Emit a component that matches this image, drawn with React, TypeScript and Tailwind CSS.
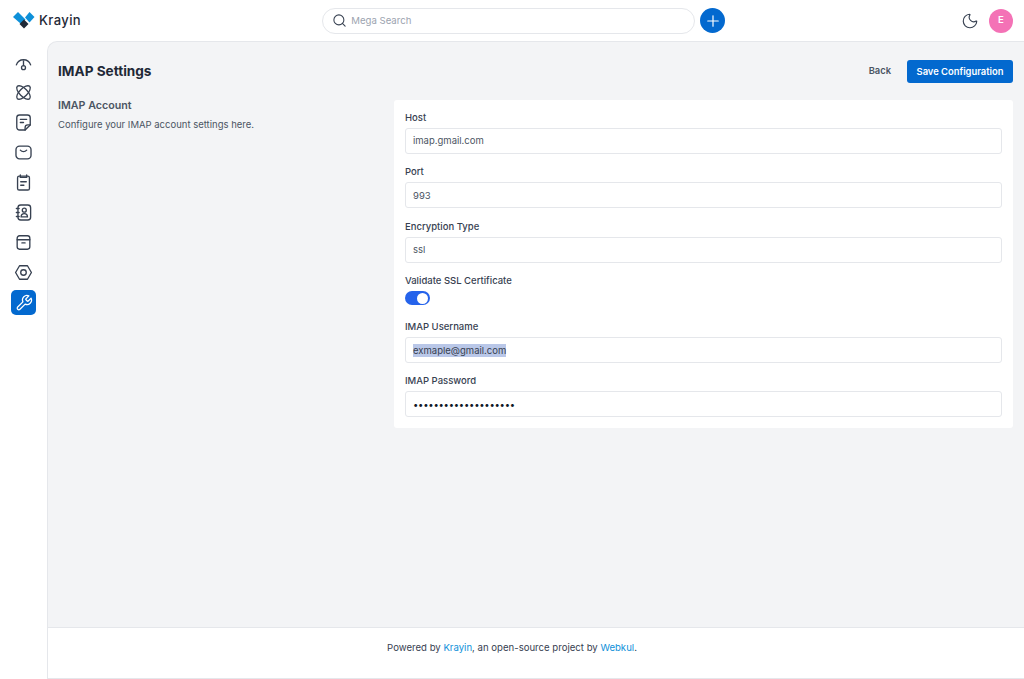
import { Moon, Plus, Search } from "lucide-react";

const navIcons = [
  <g key="dash"><path d="M3 15a9.500 9.500 0 0 1 18 0" /><circle cx="12" cy="18.500" r="2.500" /><path d="M12 16V10" /></g>,
  <g key="leads"><ellipse cx="12" cy="12" rx="11" ry="5" transform="rotate(45 12 12)" /><ellipse cx="12" cy="12" rx="11" ry="5" transform="rotate(-45 12 12)" /></g>,
  <g key="quotes"><path d="M14 21.500H7a3.500 3.500 0 0 1-3.500-3.500V6A3.500 3.500 0 0 1 7 2.500h10A3.500 3.500 0 0 1 20.500 6v9z" /><path d="M14 21.500v-3a3.500 3.500 0 0 1 3.500-3.500h3" /><path d="M8 8h8M8 12h4" /></g>,
  <g key="mail"><rect x="2.500" y="4" width="19" height="16" rx="4.500" /><path d="M8 9c2.200 2.400 5.800 2.400 8 0" /></g>,
  <g key="activity"><rect x="4.500" y="4" width="15" height="17.500" rx="2" /><path d="M8 2.500v3h8v-3M8.500 11h7M8.500 15.500h4" /></g>,
  <g key="contacts"><rect x="5" y="2.500" width="16" height="19" rx="3.500" /><circle cx="13" cy="9" r="2.500" /><path d="M9 17.500c0-5.500 8-5.500 8 0zM3 7h3.500M3 12h3.500M3 17h3.500" /></g>,
  <g key="products"><rect x="4" y="3.500" width="16" height="17" rx="3" /><path d="M4 8.500h16M10 12.500h4" /></g>,
  <g key="settings"><path d="M2 12l5-8.500h10l5 8.500-5 8.500H7z" strokeLinejoin="round" /><circle cx="12" cy="12" r="3.500" /></g>,
];

function Field({ label, value, selected, password }: { label: string; value: string; selected?: boolean; password?: boolean }) {
  return (
    <div className="mb-[12.4px]">
      <label className="mb-[5px] block h-[11px] text-[9.5px] leading-[11px] font-medium text-[#374151]">{label}</label>
      <div className="flex h-[26px] items-center rounded-[3px] border border-[#e5e7eb] px-[7px] pt-px text-[9.5px] text-[#4b5563]">
        {selected ? (
          <span className="bg-[#b9c7e8] leading-[13px] text-[#374151]">{value}</span>
        ) : password ? (
          <span className="tracking-[-0.25px] text-[#111827]">{value}</span>
        ) : (
          value
        )}
      </div>
    </div>
  );
}

export default function App() {
  return (
    <div className="flex h-[679px] flex-col overflow-hidden bg-white font-['Inter',sans-serif]">
      <header className="flex h-[41px] shrink-0 items-center justify-between pl-[13px] pr-[11px]">
        <div className="flex w-[315px] items-center gap-[4px]">
          <svg width="22" height="17" viewBox="0 0 22 17">
            <path d="M0 5 5 0 12.500 7.500 8 12z" fill="#0E90D9" />
            <path d="M16.500 0 21.500 5 16.500 10.500 12 5.500z" fill="#0E90D9" />
            <path d="M11 7.500 15.500 12 11 16.500 6.500 12z" fill="#1f2937" />
          </svg>
          <span className="text-[13px] font-medium tracking-[0.4px] text-[#1f2937]">Krayin</span>
        </div>
        <div className="flex items-center gap-[5px]">
          <div className="flex h-[26px] w-[373px] items-center gap-[4px] rounded-full border border-[#e5e7eb] pl-[9px]">
            <Search size={15} strokeWidth={1.7} className="text-[#374151]" />
            <span className="pt-px text-[9.6px] text-[#9ca3af]">Mega Search</span>
          </div>
          <div className="flex h-[25px] w-[25px] items-center justify-center rounded-full bg-[#0369cf]">
            <Plus size={18} strokeWidth={1.6} className="text-white" />
          </div>
        </div>
        <div className="flex w-[293px] items-center justify-end gap-[10px]">
          <Moon size={18} strokeWidth={1.5} className="text-[#374151]" />
          <div className="flex h-[24px] w-[24px] items-center justify-center rounded-full bg-[#f472b6] text-[9.6px] font-semibold text-white">E</div>
        </div>
      </header>
      <div className="flex min-h-0 flex-1">
        <aside className="flex w-[47px] shrink-0 flex-col items-center gap-[5px] pt-[9px]">
          {navIcons.map((icon, i) => (
            <div key={i} className="flex h-[25px] w-[25px] items-center justify-center">
              <svg width="19" height="19" viewBox="0 0 24 24" fill="none" stroke="#374151" strokeWidth="1.7" strokeLinecap="round">{icon}</svg>
            </div>
          ))}
          <div className="flex h-[25px] w-[25px] items-center justify-center rounded-[5px] bg-[#0369cf]">
            <svg width="18" height="18" viewBox="0 0 24 24" fill="none" stroke="white" strokeWidth="1.7" strokeLinecap="round" strokeLinejoin="round">
              <path d="M14.700 6.300a1 1 0 0 0 0 1.400l1.600 1.600a1 1 0 0 0 1.400 0l3.770-3.770a6 6 0 0 1-7.940 7.940l-6.910 6.910a2.120 2.120 0 0 1-3-3l6.910-6.910a6 6 0 0 1 7.940-7.940l-3.760 3.760z" />
            </svg>
          </div>
        </aside>
        <div className="flex min-w-0 flex-1 flex-col rounded-tl-[10px] border-l border-t border-[#e5e7eb] bg-[#f3f4f6]">
          <main className="flex-1 pl-[10px] pr-[11px] pt-[18px]">
            <div className="flex h-[23px] items-center justify-between">
              <h1 className="text-[13.6px] font-bold text-[#1f2937]">IMAP Settings</h1>
              <div className="flex items-center gap-[16px]">
                <span className="text-[9.4px] font-semibold text-[#4b5563]">Back</span>
                <button className="h-[23px] w-[106px] rounded-[3px] bg-[#0369cf] pt-px text-[9.4px] font-semibold text-white">Save Configuration</button>
              </div>
            </div>
            <div className="mt-[17px] flex">
              <div className="w-[336px] shrink-0">
                <p className="mt-[-1px] text-[10.7px] leading-[13px] font-semibold text-[#4b5563]">IMAP Account</p>
                <p className="mt-[6px] text-[9.5px] leading-[13px] text-[#4b5563]">Configure your IMAP account settings here.</p>
              </div>
              <div className="h-[328px] flex-1 rounded-[3px] bg-white px-[11px] pt-[12px]">
                <Field label="Host" value="imap.gmail.com" />
                <Field label="Port" value="993" />
                <Field label="Encryption Type" value="ssl" />
                <div className="mb-[15.6px]">
                  <label className="mb-[5px] block h-[11px] text-[9.5px] leading-[11px] font-medium text-[#374151]">Validate SSL Certificate</label>
                  <div className="flex h-[14px] w-[25px] items-center justify-end rounded-full bg-[#2563eb] pr-[2px]">
                    <div className="h-[11px] w-[11px] rounded-full bg-white" />
                  </div>
                </div>
                <Field label="IMAP Username" value="exmaple@gmail.com" selected />
                <Field label="IMAP Password" value="••••••••••••••••••••" password />
              </div>
            </div>
          </main>
          <footer className="flex h-[52px] shrink-0 justify-center border-y border-[#e5e7eb] bg-white pr-[48px] pt-[13px] text-[9.6px] leading-[13px] text-[#374151]">
            <span>
              Powered by <span className="text-[#0e90d9]">Krayin</span>, an open-source project by <span className="text-[#0e90d9]">Webkul</span>.
            </span>
          </footer>
        </div>
      </div>
    </div>
  );
}
